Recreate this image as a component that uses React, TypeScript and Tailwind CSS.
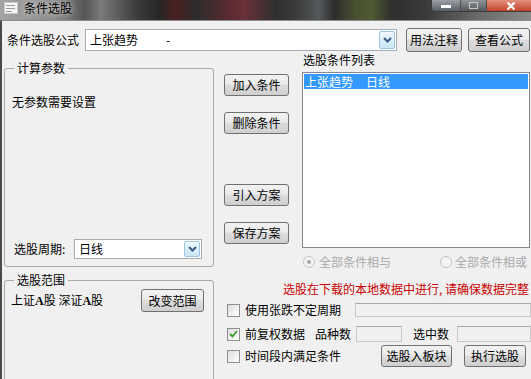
import type { ReactNode } from "react"

function Btn({ children, className = "" }: { children: ReactNode; className?: string }) {
  return (
    <button
      className={`flex items-center justify-center rounded-[3px] border border-[#707070] bg-[linear-gradient(#f2f2f2,#ebebeb_45%,#dddddd_50%,#cfcfcf)] text-[12px] leading-[14px] text-black ${className}`}
    >
      {children}
    </button>
  )
}

function Chevron() {
  return (
    <svg width="9" height="6" viewBox="0 0 9 6">
      <path d="M1 1 L4.5 4.5 L8 1" fill="none" stroke="#3d5a86" strokeWidth="2" />
    </svg>
  )
}

function Combo({ children, className = "" }: { children: ReactNode; className?: string }) {
  return (
    <div className={`flex items-stretch border border-[#a5acb5] bg-white ${className}`}>
      <div className="flex flex-1 items-center pl-[4px] text-[12px] leading-[14px]">{children}</div>
      <div className="m-[1px] flex w-[16px] items-center justify-center rounded-[2px] border border-[#9ac4e2] bg-[linear-gradient(#f0f8fd,#c9e6f7)]">
        <Chevron />
      </div>
    </div>
  )
}

function Check({ checked = false }: { checked?: boolean }) {
  return (
    <div className="flex h-[13px] w-[13px] shrink-0 items-center justify-center border border-[#8e8f8f] bg-[linear-gradient(135deg,#dcdcdc,#ffffff)]">
      {checked && (
        <svg width="9" height="8" viewBox="0 0 9 8">
          <path d="M1 4 L3.5 6.5 L8 1" fill="none" stroke="#3a9a2a" strokeWidth="1.8" />
        </svg>
      )}
    </div>
  )
}

function Radio({ checked = false }: { checked?: boolean }) {
  return (
    <div className="flex h-[12px] w-[12px] shrink-0 items-center justify-center rounded-full border border-[#c4c4c4] bg-[#f4f4f4]">
      {checked && <div className="h-[4px] w-[4px] rounded-full bg-[#a8a8a8]" />}
    </div>
  )
}

function Field({ className = "" }: { className?: string }) {
  return <div className={`border border-[#c8c8c8] border-t-[#a8a8a8] bg-[#f0f0f0] ${className}`} />
}

export default function App() {
  return (
    <div className="flex h-[379px] w-[531px] flex-col overflow-hidden bg-[#f0f0f0] font-['Noto_Sans_CJK_SC',sans-serif] text-[12px] leading-[14px] text-black">
      {/* title bar */}
      <div className="flex h-[20px] shrink-0 items-start justify-between bg-[linear-gradient(90deg,#a4a4a4_0%,#8c8c8c_10%,#565656_16%,#7a7a7a_19%,#3a3a3a_26%,#262626_30%,#4a2020_33%,#2c2c2c_37%,#5a2a30_43%,#6a3038_46%,#2e2e2e_52%,#3c3c3c_56%,#555a5c_60%,#2c2c2c_63%,#4a5232_67%,#4e5a30_70%,#2e2e2e_74%,#3a3a3a_80%,#6a6a6a_90%,#8a8a8a_100%)]">
        <div className="flex items-center gap-[6px] pl-[4px] pt-[1px]">
          <svg width="14" height="12" viewBox="0 0 14 12">
            <rect x="0.5" y="0.5" width="13" height="11" fill="#f4f4f4" stroke="#c8c8c8" />
            <rect x="2" y="3" width="9" height="1" fill="#9a9a9a" />
            <rect x="2" y="6" width="9" height="1" fill="#9a9a9a" />
            <rect x="2" y="9" width="6" height="1" fill="#9a9a9a" />
          </svg>
          <span className="text-[12px] leading-[14px] text-black [text-shadow:0_0_6px_#ffffff]">条件选股</span>
        </div>
        <div className="mr-[-4px] flex h-[12px] overflow-hidden rounded-b-[4px] border border-t-0 border-[#3a3a3a]">
          <div className="flex w-[29px] items-center justify-center border-r border-[#505050] bg-[linear-gradient(#9aa0a6,#5a5f66)]">
            <div className="mt-[2px] h-[3px] w-[10px] bg-white" />
          </div>
          <div className="flex w-[26px] items-center justify-center border-r border-[#505050] bg-[linear-gradient(#8f9499,#55595e)]">
            <div className="h-[7px] w-[9px] border border-[#c8c8c8]" />
          </div>
          <div className="flex w-[47px] items-center justify-center bg-[linear-gradient(#e2907e,#c4432b)]">
            <svg width="10" height="8" viewBox="0 0 10 8">
              <path d="M1.5 0.5 L8.5 7.5 M8.5 0.5 L1.5 7.5" stroke="#ffffff" strokeWidth="2.2" />
            </svg>
          </div>
        </div>
      </div>

      {/* body */}
      <div className="flex flex-1 flex-col border-l-[2px] border-t border-l-[#4a4a4a] border-t-[#8c8c8c]">
        {/* formula row */}
        <div className="flex h-[31px] shrink-0 items-end pl-[5px]">
          <div className="flex h-[24px] items-center">
            <span>条件选股公式</span>
            <Combo className="ml-[6px] h-[22px] w-[312px]">
              <span>上张趋势</span>
              <span className="ml-[28px]">-</span>
            </Combo>
            <Btn className="ml-[9px] h-[24px] w-[56px]">用法注释</Btn>
            <Btn className="ml-[6px] h-[24px] w-[62px]">查看公式</Btn>
          </div>
        </div>

        <div className="flex flex-1 pl-[2px]">
          {/* left column */}
          <div className="flex w-[210px] shrink-0 flex-col">
            <fieldset className="mt-[9px] rounded-[3px] border border-[#a9a9a9]">
              <legend className="ml-[9px] px-[3px] leading-[14px]">计算参数</legend>
              <div className="flex h-[191px] flex-col">
                <div className="mt-[20px] pl-[7px]">无参数需要设置</div>
                <div className="mb-[7px] mt-auto flex items-center pl-[9px]">
                  <span className="w-[60px]">选股周期:</span>
                  <Combo className="h-[20px] w-[128px]">日线</Combo>
                </div>
              </div>
            </fieldset>
            <fieldset className="mt-[6px] h-[140px] rounded-[3px] border border-[#a9a9a9]">
              <legend className="ml-[9px] px-[3px] leading-[14px]">选股范围</legend>
              <div className="mt-[2px] flex items-center pl-[6px]">
                <span>
                  上证<span className="font-['Liberation_Serif',serif] font-bold">A</span>股 深证
                  <span className="font-['Liberation_Serif',serif] font-bold">A</span>股
                </span>
                <Btn className="ml-auto mr-[9px] h-[23px] w-[63px]">改变范围</Btn>
              </div>
            </fieldset>
          </div>

          {/* right area */}
          <div className="ml-[10px] flex flex-1 flex-col">
            <div className="flex h-[196px] shrink-0">
              <div className="flex w-[65px] shrink-0 flex-col">
                <Btn className="mt-[22px] h-[22px] w-[65px]">加入条件</Btn>
                <Btn className="mt-[16px] h-[22px] w-[65px]">删除条件</Btn>
                <Btn className="mt-[50px] h-[22px] w-[65px]">引入方案</Btn>
                <Btn className="mt-[16px] h-[22px] w-[65px]">保存方案</Btn>
              </div>
              <div className="ml-[13px] flex w-[228px] flex-col">
                <div className="mt-[1px] pl-[1px]">选股条件列表</div>
                <div className="mt-[5px] h-[176px] border border-[#828790] bg-white p-[1px]">
                  <div className="flex h-[15px] items-center bg-[#3399ff] pl-[1px] text-white">
                    <span>上张趋势</span>
                    <span className="ml-[13px]">日线</span>
                  </div>
                </div>
              </div>
            </div>

            <div className="mt-[7px] flex h-[14px] items-center text-[#a9a9a9]">
              <div className="ml-[79px] flex items-center gap-[4px]">
                <Radio checked />
                <span>全部条件相与</span>
              </div>
              <div className="ml-[49px] flex items-center gap-[3px]">
                <Radio />
                <span>全部条件相或</span>
              </div>
            </div>

            <div className="mt-[13px] h-[14px] whitespace-nowrap pl-[59px] text-[#c80000]">
              选股在下载的本地数据中进行, 请确保数据完整
            </div>

            <div className="mt-[7px] flex h-[14px] items-center pl-[3px]">
              <Check />
              <span className="ml-[5px] w-[110px]">使用张跌不定周期</span>
              <Field className="h-[14px] flex-1" />
            </div>

            <div className="mt-[9px] flex h-[16px] items-center pl-[3px]">
              <Check checked />
              <span className="ml-[5px]">前复权数据</span>
              <span className="ml-[10px]">品种数</span>
              <Field className="ml-[5px] h-[16px] w-[46px]" />
              <span className="ml-[11px]">选中数</span>
              <Field className="ml-[8px] h-[16px] flex-1" />
            </div>

            <div className="mt-[3px] flex h-[22px] items-center pl-[3px]">
              <Check />
              <span className="ml-[5px]">时间段内满足条件</span>
              <Btn className="ml-[40px] h-[22px] w-[71px]">选股入板块</Btn>
              <Btn className="ml-[12px] h-[22px] w-[62px]">执行选股</Btn>
            </div>
          </div>
        </div>
      </div>
    </div>
  )
}
